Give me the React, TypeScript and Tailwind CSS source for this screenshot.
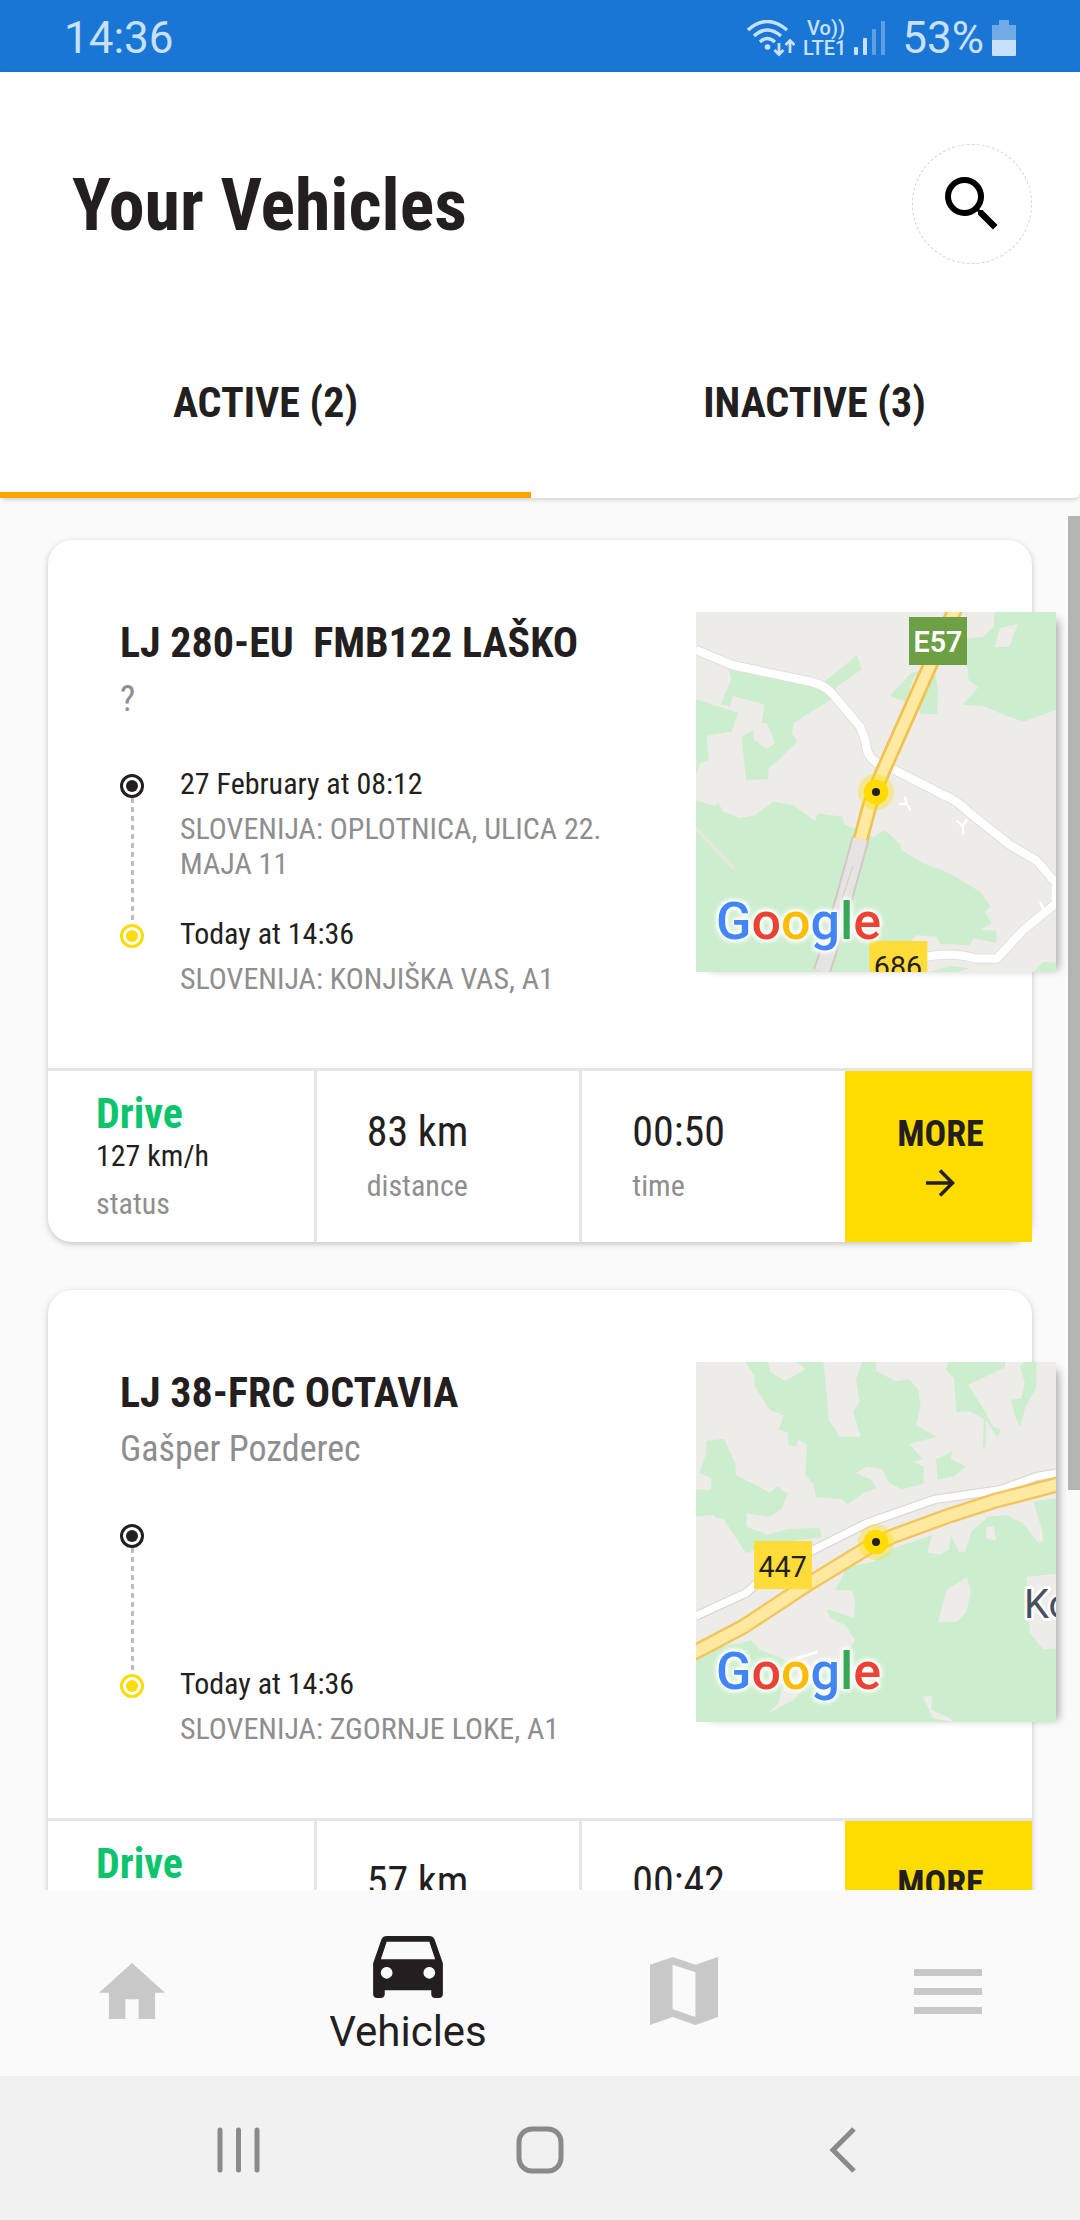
import { MdSearch } from "react-icons/md";

interface Stop {
  time?: string;
  address?: string;
}

interface Vehicle {
  id: string;
  name: string;
  driver: string;
  from: Stop;
  to: Stop;
  status: string;
  speed: string;
  distance: string;
  time: string;
}

const vehicles: Vehicle[] = [
  {
    id: "lj280",
    name: "LJ 280-EU  FMB122 LAŠKO",
    driver: "?",
    from: {
      time: "27 February at 08:12",
      address: "SLOVENIJA: OPLOTNICA, ULICA 22. MAJA 11",
    },
    to: { time: "Today at 14:36", address: "SLOVENIJA: KONJIŠKA VAS, A1" },
    status: "Drive",
    speed: "127 km/h",
    distance: "83 km",
    time: "00:50",
  },
  {
    id: "lj38",
    name: "LJ 38-FRC OCTAVIA",
    driver: "Gašper Pozderec",
    from: {},
    to: { time: "Today at 14:36", address: "SLOVENIJA: ZGORNJE LOKE, A1" },
    status: "Drive",
    speed: "119 km/h",
    distance: "57 km",
    time: "00:42",
  },
];

function StatusBar() {
  return (
    <div className="flex h-[72px] shrink-0 items-center justify-between bg-[#1976d5] px-16 pt-1 font-['Roboto'] text-[44px] text-[#c8e0fa]">
      <span>14:36</span>
      <div className="flex items-center gap-2">
        <svg viewBox="0 0 48 37" className="h-[37px] w-12" fill="none" stroke="currentColor">
          <path d="M1 10Q20-7 40 10" strokeWidth="3.4" />
          <path d="M7 16Q20 4 34 16" strokeWidth="3.4" />
          <path d="M13 22Q20 15 28 22" strokeWidth="3.4" />
          <circle cx="20.5" cy="27" r="2.8" fill="currentColor" stroke="none" />
          <path d="M32 23v11M27.5 30l4.5 4.5L36.5 30M43 33V21M38.5 25L43 20.5 47.500 25" strokeWidth="2.8" />
        </svg>
        <div className="flex flex-col text-[20px] leading-5 font-medium">
          <span className="pl-1">Vo))</span>
          <span>LTE1</span>
        </div>
        <svg viewBox="0 0 32 36" className="h-9 w-8" fill="currentColor">
          <rect x="0" y="27" width="4" height="8" rx="1" />
          <rect x="9" y="18" width="4" height="17" rx="1" />
          <rect x="18" y="9" width="4" height="26" rx="1" opacity=".4" />
          <rect x="27" y="1" width="4" height="34" rx="1" opacity=".4" />
        </svg>
        <span className="pl-2">53%</span>
        <svg viewBox="0 0 24 36" className="h-9 w-6" fill="currentColor">
          <path d="M7 0h10v5h7v15H0V5h7z" opacity=".5" />
          <path d="M0 20h24v15q0 1-1 1H1q-1 0-1-1z" />
        </svg>
      </div>
    </div>
  );
}

function Header() {
  return (
    <header className="relative z-10 shrink-0 rounded-b-md bg-white shadow-[0_2px_4px_rgba(0,0,0,0.16)]">
      <div className="flex items-center justify-between pt-[72px] pr-12 pl-[72px]">
        <h1 className="pt-1 text-[72px] leading-[116px] font-bold">Your Vehicles</h1>
        <button
          type="button"
          aria-label="Search"
          className="flex size-[120px] items-center justify-center rounded-full border border-dashed border-[#d4d4d4] text-black"
        >
          <MdSearch className="size-[72px]" />
        </button>
      </div>
      <div role="tablist" className="mt-[42px] grid grid-cols-2 gap-[18px] text-[42px] font-bold">
        <button
          type="button"
          role="tab"
          aria-selected="true"
          className="h-[192px] border-b-6 border-[#ffa500] pt-1.5"
        >
          ACTIVE (2)
        </button>
        <button
          type="button"
          role="tab"
          aria-selected="false"
          className="h-[192px] border-b-6 border-transparent pt-1.5"
        >
          INACTIVE (3)
        </button>
      </div>
    </header>
  );
}

function GoogleMark() {
  return (
    <div className="absolute bottom-[18px] left-5 font-['Roboto'] text-[52px] leading-[64px] font-medium text-[#4285f4] [filter:drop-shadow(0_0_2px_#fff)_drop-shadow(0_0_2px_#fff)_drop-shadow(0_0_1px_#fff)]">
      <span>G</span>
      <span className="text-[#ea4335]">o</span>
      <span className="text-[#fbbc05]">o</span>
      <span>g</span>
      <span className="text-[#34a853]">l</span>
      <span className="text-[#ea4335]">e</span>
    </div>
  );
}

function Pin() {
  return (
    <>
      <circle cx="648" cy="636" r="54" fill="#ffdc00" opacity=".35" />
      <circle cx="648" cy="636" r="37" fill="#ffdc00" />
      <circle cx="648" cy="636" r="12" fill="#231f20" />
    </>
  );
}

function KonjiskaMap() {
  return (
    <svg viewBox="108 96 1080 1080" className="size-full" fill="none" strokeLinejoin="round">
      <rect x="108" y="96" width="1080" height="1080" fill="#eeece8" />
      <g fill="#cdeece">
        <path d="M203 262L440 312 490 308 590 226 606 268 530 320 510 360 400 430 396 460 412 486 325 568V598L258 600 245 470 280 450 282 480 320 507 345 490 320 428 305 430 314 374 218 348 212 378 181 374 214 300z" />
        <path d="M108 358L235 398 215 455 140 468 146 540 122 548 108 585z" />
        <path d="M108 660L165 678 175 668 190 695 240 714 285 706 340 665 400 676 465 722 474 700 548 710 552 732 640 772 675 750 720 792 726 812 790 850 870 880 960 935 992 980 974 995 996 1030 960 1050 1010 1052 1008 1090 940 1074 930 1096 840 1092 830 1070 770 1066 750 1084 640 1090 626 1176H108z" />
        <path d="M1003 96H1188V390L1090 425 1032 405 970 378 908 374 955 322 926 300 921 256V176L970 170 1002 140z" />
        <path d="M752 280L690 348 740 366 762 350 782 402H831L834 340 824 260z" />
        <path d="M1120 1176L1150 1145 1188 1148V1176zM805 1176L870 1158 930 1165 890 1176z" />
      </g>
      <path d="M1020 145L1074 132 1048 200 1004 202zM750 320L768 282 772 315 750 362z" fill="#eeece8" />
      <path d="M108 745L222 866" stroke="#e9e6df" strokeWidth="9" />
      <path
        d="M108 210L220 256 450 305Q495 315 520 345L600 440Q615 470 622 515 640 555 700 568L850 645Q890 660 930 700L1050 795 1130 842 1188 910M800 1130Q880 1115 950 1136L1010 1136 1090 1050 1188 970"
        stroke="#dfdcd7"
        strokeWidth="30"
      />
      <path
        d="M108 210L220 256 450 305Q495 315 520 345L600 440Q615 470 622 515 640 555 700 568L850 645Q890 660 930 700L1050 795 1130 842 1188 910V970L1090 1050 1010 1136H950Q880 1115 800 1130"
        stroke="#fff"
        strokeWidth="25"
      />
      <path d="M602 775L555 945 510 1100 485 1176" stroke="#d2c8c4" strokeWidth="54" />
      <path d="M602 775L555 945 510 1100 485 1176" stroke="#e6e4e2" strokeWidth="42" />
      <path d="M578 860L545 960" stroke="#d2c8c4" strokeWidth="3" />
      <path d="M886 86L795 290 662 590 628 680 602 777" stroke="#f2c14e" strokeWidth="48" />
      <path d="M886 86L795 290 662 590 628 680 602 777" stroke="#ffe9a3" strokeWidth="32" />
      <path d="M735 650L740 672 718 672M740 672L752 692M890 722L908 738 922 718M908 738L910 764M1140 966L1152 990" stroke="#fff" strokeWidth="7" />
      <rect x="747" y="111" width="174" height="144" fill="#6d9f44" />
      <text x="834" y="217" textAnchor="middle" fontSize="86" fontFamily="Roboto" fontWeight="600" fill="#fff">E57</text>
      <rect x="628" y="1083" width="174" height="144" fill="#ffdc38" />
      <text x="714" y="1190" textAnchor="middle" fontSize="86" fontFamily="Roboto" fill="#231f20">686</text>
      <Pin />
    </svg>
  );
}

function LokeMap() {
  return (
    <svg viewBox="108 96 1080 1080" className="size-full" fill="none" strokeLinejoin="round">
      <rect x="108" y="96" width="1080" height="1080" fill="#cdeece" />
      <g fill="#eeece8">
        <path d="M108 96H256L282 135 285 170 330 240 372 256 356 298 384 308 386 345 408 350 414 330 442 342 436 435 460 462 468 500 545 508 560 524 610 490 650 475 635 450 588 428 620 410 668 418 686 458 725 478 790 462 792 410 760 396 788 386 748 342 830 320 768 285 782 230 776 180 748 148 706 154 648 122V96H865L858 118 882 146 890 246 930 244 972 266 968 350 976 352 978 270 1012 322 1022 300 1000 290 970 235 925 165 1035 112V96H1092L1080 108 1094 158 1084 205 1052 210 1070 270 1105 330 1082 290 1095 235 1128 175 1130 96H1188V505L1120 515 1146 600 1150 632 1136 640 1090 580 1040 556 985 560 935 602 916 665H896L874 615 866 660 838 674 802 668 816 615 700 655 640 695 560 712 540 752 525 780 576 782 586 815 582 864 500 838 512 865 555 885 586 930 540 1000 470 1030 400 1110 320 1152 356 1120 364 1074 430 1010 300 960 274 930 240 940 108 960V560L160 555 258 670 345 640 484 622 480 594 390 596 320 614 302 606 260 590V550L330 560 366 535 384 492 352 468 330 488 228 436 226 400 192 326 140 332 138 372 118 428 155 445 152 480 108 478z" />
        <path d="M324 96H412L436 118 376 152 330 126zM490 96H606L588 150 598 215 580 245 602 320H540L506 270 500 190z" />
        <path d="M920 742L932 780 920 845 890 875 834 876 860 780zM1100 740L1188 732V955L1150 958 1110 910 1105 790zM980 590L1002 590 1008 632 978 624zM788 1100L816 1098 814 1140 870 1165 880 1176 820 1165z" />
      </g>
      <path d="M828 388L878 364 872 386 918 410 884 438 832 450z" fill="#cdeece" />
      <path d="M108 560L190 566 258 670 150 700 108 800z" fill="#eeece8" />
      <path d="M108 858L260 788 300 750 460 660 620 580 825 508 1020 480 1130 440 1188 430" stroke="#d9d6d2" strokeWidth="29" />
      <path d="M108 858L260 788 300 750 460 660 620 580 825 508 1020 480 1130 440 1188 430" stroke="#fff" strokeWidth="22" />
      <path d="M410 985L472 966" stroke="#fff" strokeWidth="8" />
      <path d="M98 970L250 890 440 765 620 655 700 618 870 556 1000 514 1198 462" stroke="#f2c55c" strokeWidth="48" />
      <path d="M98 970L250 890 440 765 620 655 700 618 870 556 1000 514 1198 462" stroke="#ffe8a0" strokeWidth="34" />
      <rect x="282" y="633" width="174" height="144" fill="#ffdc38" />
      <text x="368" y="740" textAnchor="middle" fontSize="86" fontFamily="Roboto" fill="#231f20">447</text>
      <text x="1092" y="864" fontSize="120" fontFamily="Roboto" fill="#47505c" stroke="#fff" strokeWidth="16" paintOrder="stroke">Ko</text>
      <Pin />
    </svg>
  );
}

function Marker({ tone, line }: { tone: string; line?: boolean }) {
  return (
    <div className={`mt-2 -mb-2 flex flex-col items-center ${tone}`}>
      <svg viewBox="0 0 24 24" className="size-6 shrink-0">
        <circle cx="12" cy="12" r="10.5" fill="none" stroke="currentColor" strokeWidth="3" />
        <circle cx="12" cy="12" r="6" fill="currentColor" />
      </svg>
      {line && (
        <div className="w-[3px] flex-1 bg-[repeating-linear-gradient(#bdbdbd_0_5px,transparent_5px_9px)]" />
      )}
    </div>
  );
}

function StopText({ stop }: { stop: Stop }) {
  return (
    <div className="text-[30px]">
      <p className="leading-9">{stop.time}</p>
      <p className="mt-[9px] leading-[35px] text-[#8e8e8e]">{stop.address}</p>
    </div>
  );
}

function Stat({ value, label }: { value: string; label: string }) {
  return (
    <div className="flex flex-col justify-center border-l-3 border-[#e6e6e6] pb-0.5 pl-[50px]">
      <span className="text-[42px] leading-12">{value}</span>
      <span className="mt-3 text-[30px] leading-9 text-[#8e8e8e]">{label}</span>
    </div>
  );
}

function VehicleCard({ vehicle }: { vehicle: Vehicle }) {
  return (
    <article className="rounded-3xl bg-white shadow-[0_2px_6px_rgba(0,0,0,0.22)]">
      <div className="flex pt-[72px] pb-[72px] pl-[72px]">
        <div className="min-w-0 flex-1 pr-12">
          <h2 className="text-[42px] leading-[62px] font-bold whitespace-pre">{vehicle.name}</h2>
          <p className="text-[36px] leading-[50px] text-[#8e8e8e]">{vehicle.driver}</p>
          <ol className="mt-[42px]">
            <li className="flex min-h-[150px] gap-9">
              <Marker tone="text-[#231f20]" line />
              <StopText stop={vehicle.from} />
            </li>
            <li className="flex gap-9">
              <Marker tone="text-[#fadb0c]" />
              <StopText stop={vehicle.to} />
            </li>
          </ol>
        </div>
        <div className="relative -mr-6 size-[360px] shrink-0 overflow-hidden shadow-[8px_3px_8px_-5px_rgba(0,0,0,0.3)]">
          {vehicle.id === "lj280" ? <KonjiskaMap /> : <LokeMap />}
          <GoogleMark />
        </div>
      </div>
      <div className="grid h-[174px] grid-cols-[1fr_1fr_1fr_187px] border-t-3 border-[#e6e6e6]">
        <div className="flex flex-col justify-center pb-0.5 pl-12">
          <span className="text-[42px] leading-12 font-bold text-[#0bc46c]">{vehicle.status}</span>
          <span className="text-[30px] leading-9">{vehicle.speed}</span>
          <span className="mt-3 text-[30px] leading-9 text-[#8e8e8e]">status</span>
        </div>
        <Stat value={vehicle.distance} label="distance" />
        <Stat value={vehicle.time} label="time" />
        <button
          type="button"
          className="flex flex-col items-center justify-center gap-2.5 bg-[#ffdc00] pl-1 text-[36px] leading-[42px] font-bold"
        >
          MORE
          <svg viewBox="0 0 36 36" className="size-9" fill="none" stroke="currentColor" strokeWidth="3.5">
            <path d="M4 18h26M18 5.500L30.500 18 18 30.500" />
          </svg>
        </button>
      </div>
    </article>
  );
}

function BottomNav() {
  return (
    <nav className="grid h-[186px] shrink-0 grid-cols-[11fr_12fr_11fr_11fr] items-center justify-items-center bg-[#fafafa] pt-4 text-[#c8c8c8]">
      <a href="#home" aria-label="Home">
        <svg viewBox="2 3 20 17" className="h-[56px] w-[66px]" fill="currentColor">
          <path d="M10 20v-6h4v6h5v-8h3L12 3 2 12h3v8z" />
        </svg>
      </a>
      <a href="#vehicles" className="flex flex-col items-center gap-2.5 pt-2.5 text-[#231f20]">
        <svg viewBox="3 5 18 16" className="h-[62px] w-[70px]" fill="currentColor">
          <path d="M18.920 6.010C18.720 5.420 18.160 5 17.500 5h-11c-.66 0-1.210.42-1.420 1.010L3 12v8c0 .55.45 1 1 1h1c.55 0 1-.45 1-1v-1h12v1c0 .55.45 1 1 1h1c.55 0 1-.45 1-1v-8l-2.080-5.990zM6.500 16c-.83 0-1.500-.67-1.500-1.500S5.670 13 6.500 13s1.500.67 1.500 1.500S7.330 16 6.500 16zm11 0c-.83 0-1.500-.67-1.500-1.500s.67-1.500 1.500-1.500 1.500.67 1.500 1.500-.67 1.500-1.500 1.500zM5 11l1.500-4.500h11L19 11H5z" />
        </svg>
        <span className="font-['Roboto'] text-[42px] leading-12">Vehicles</span>
      </a>
      <a href="#map" aria-label="Map">
        <svg viewBox="0 0 202 202" className="size-[68px]" fill="currentColor" fillRule="evenodd">
          <path d="M0 23L67 0 135 23 202 0V178L135 202 67 178 0 202zM67 23V155L135 178V45z" />
        </svg>
      </a>
      <button type="button" aria-label="Menu" className="flex w-[68px] flex-col gap-3">
        <span className="h-[7px] bg-current" />
        <span className="h-[7px] bg-current" />
        <span className="h-[7px] bg-current" />
      </button>
    </nav>
  );
}

function SystemNav() {
  return (
    <div className="flex h-36 shrink-0 items-center justify-center gap-[254px] bg-[#f1f1f1] pt-1 text-[#8a8a8a]">
      <button type="button" aria-label="Recent apps">
        <svg viewBox="0 0 48 48" className="size-12" fill="none" stroke="currentColor" strokeWidth="5" strokeLinecap="round">
          <path d="M6 4v40M24.500 4v40M43 4v40" />
        </svg>
      </button>
      <button type="button" aria-label="Home screen">
        <svg viewBox="0 0 48 48" className="size-12" fill="none" stroke="currentColor" strokeWidth="5">
          <rect x="3" y="3" width="42" height="42" rx="13" />
        </svg>
      </button>
      <button type="button" aria-label="Back">
        <svg viewBox="0 0 48 48" className="size-12" fill="none" stroke="currentColor" strokeWidth="5">
          <path d="M36 3L15 24l21 21" />
        </svg>
      </button>
    </div>
  );
}

export default function App() {
  return (
    <div className="flex h-screen flex-col overflow-hidden bg-[#fafafa] font-['Roboto_Condensed','Roboto',sans-serif] text-[#231f20]">
      <StatusBar />
      <Header />
      <main className="relative min-h-0 flex-1 overflow-hidden">
        <div className="flex flex-col gap-12 px-12 pt-[42px]">
          {vehicles.map((vehicle) => (
            <VehicleCard key={vehicle.id} vehicle={vehicle} />
          ))}
        </div>
        <div className="absolute top-[18px] right-0 h-[70%] w-3 bg-[#b4b4b4]" />
      </main>
      <BottomNav />
      <SystemNav />
    </div>
  );
}
